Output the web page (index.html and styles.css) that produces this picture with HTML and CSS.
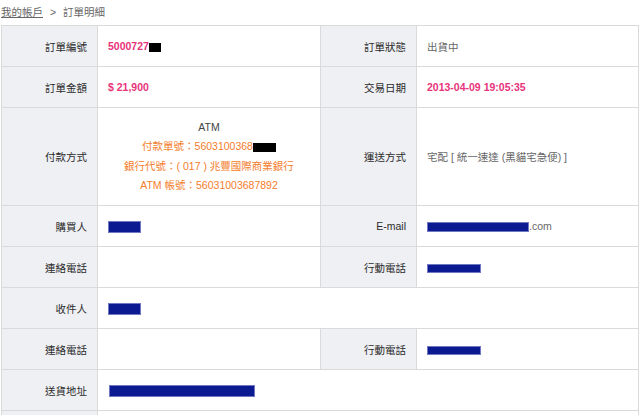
FILE: index.html
```html
<!DOCTYPE html>
<html lang="zh-TW">
<head>
    <meta charset="UTF-8">
    <meta name="viewport" content="width=device-width, initial-scale=1.0">
    <title>訂單明細</title>
    <link rel="stylesheet" href="styles.css">
</head>
<body>
    <div class="breadcrumb">
        <a href="#">我的帳戶</a>
        <span class="sep">&gt;</span>
        <span>訂單明細</span>
    </div>

    <table class="order">
        <colgroup>
            <col class="col-label">
            <col class="col-value">
            <col class="col-label">
            <col class="col-value2">
        </colgroup>
        <tr>
            <th>訂單編號</th>
            <td class="hl">5000727<span class="mask mask-sm"></span></td>
            <th>訂單狀態</th>
            <td>出貨中</td>
        </tr>
        <tr>
            <th>訂單金額</th>
            <td class="hl">$ 21,900</td>
            <th>交易日期</th>
            <td class="hl">2013-04-09 19:05:35</td>
        </tr>
        <tr class="tall">
            <th>付款方式</th>
            <td class="pay">
                <div class="pay-type">ATM</div>
                <div class="pay-line">付款單號：5603100368<span class="mask mask-md"></span></div>
                <div class="pay-line">銀行代號：( 017 ) 兆豐國際商業銀行</div>
                <div class="pay-line">ATM 帳號：56031003687892</div>
            </td>
            <th>運送方式</th>
            <td>宅配 [ 統一速達 (黑貓宅急便) ]</td>
        </tr>
        <tr>
            <th>購買人</th>
            <td><span class="blot blot-name"></span></td>
            <th>E-mail</th>
            <td><span class="blot blot-mail"></span>.com</td>
        </tr>
        <tr>
            <th>連絡電話</th>
            <td></td>
            <th>行動電話</th>
            <td><span class="blot blot-phone"></span></td>
        </tr>
        <tr>
            <th>收件人</th>
            <td colspan="3"><span class="blot blot-name"></span></td>
        </tr>
        <tr>
            <th>連絡電話</th>
            <td></td>
            <th>行動電話</th>
            <td><span class="blot blot-phone"></span></td>
        </tr>
        <tr>
            <th>送貨地址</th>
            <td colspan="3"><span class="blot blot-addr"></span></td>
        </tr>
        <tr>
            <th></th>
            <td colspan="3"></td>
        </tr>
    </table>
</body>
</html>
```

FILE: styles.css
```css
body {
    font-family: 'Liberation Sans', 'Noto Sans CJK TC', sans-serif;
    font-size: 10.5px;
    color: #333;
    margin: 0;
    padding: 0 1px;
}
.breadcrumb {
    color: #666;
    line-height: 14px;
    padding-top: 5px;
    height: 20px;
}
.breadcrumb a {
    color: #666;
    text-decoration: underline;
}
.breadcrumb .sep {
    margin: 0 4px;
}
.order {
    width: 638px;
    border-collapse: collapse;
    table-layout: fixed;
}
.col-label {
    width: 96px;
}
.col-value {
    width: 223px;
}
.col-value2 {
    width: 222px;
}
.order th,
.order td {
    border: 1px solid #dadada;
    height: 40px;
    padding: 0 10px;
    vertical-align: middle;
}
.order th {
    background-color: #eff0f4;
    text-align: right;
    font-weight: normal;
    color: #2a2a2a;
}
.order td {
    color: #666;
    text-align: left;
}
.order .tall th,
.order .tall td {
    height: 97px;
}
.order td.hl {
    color: #e8337a;
    font-weight: bold;
}
.order td.pay {
    text-align: center;
    line-height: 19.5px;
}
.pay-type {
    color: #444;
}
.pay-line {
    color: #f47d2c;
}
.mask {
    display: inline-block;
    background: #000;
    vertical-align: middle;
}
.mask-sm {
    width: 12px;
    height: 9px;
}
.mask-md {
    width: 23px;
    height: 9px;
}
.blot {
    display: inline-block;
    background: #0b1a91;
    border: 1px solid #6f78c0;
    box-sizing: border-box;
    vertical-align: middle;
}
.blot-name {
    width: 33px;
    height: 12px;
}
.blot-mail {
    width: 102px;
    height: 10px;
}
.blot-phone {
    width: 54px;
    height: 9px;
}
.blot-addr {
    width: 146px;
    height: 12px;
    margin-left: 1px;
}
```
